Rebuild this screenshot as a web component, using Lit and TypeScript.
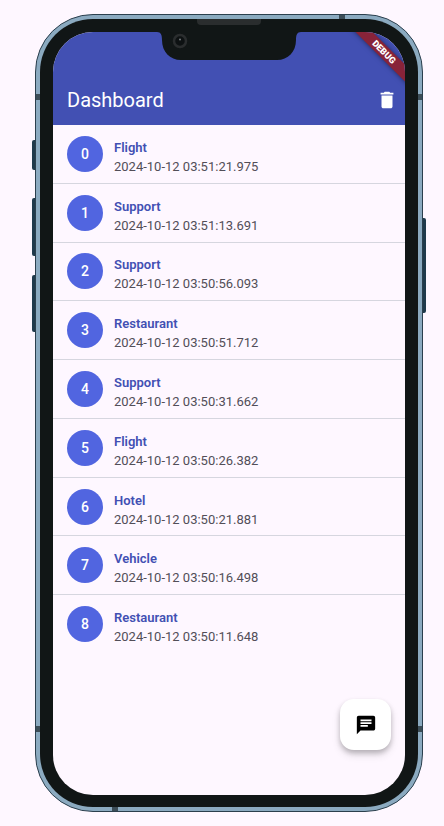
import { LitElement, html, css } from "lit";
import { customElement, property } from "lit/decorators.js";

interface Entry {
  kind: string;
  time: string;
}

const ENTRIES: Entry[] = [
  { kind: "Flight", time: "2024-10-12 03:51:21.975" },
  { kind: "Support", time: "2024-10-12 03:51:13.691" },
  { kind: "Support", time: "2024-10-12 03:50:56.093" },
  { kind: "Restaurant", time: "2024-10-12 03:50:51.712" },
  { kind: "Support", time: "2024-10-12 03:50:31.662" },
  { kind: "Flight", time: "2024-10-12 03:50:26.382" },
  { kind: "Hotel", time: "2024-10-12 03:50:21.881" },
  { kind: "Vehicle", time: "2024-10-12 03:50:16.498" },
  { kind: "Restaurant", time: "2024-10-12 03:50:11.648" },
];

/* Phone body: metal rim, side keys, bezel, notch. The slot is the screen. */
@customElement("phone-frame")
export class PhoneFrame extends LitElement {
  static styles = css`
    :host {
      display: flex;
      flex: 1;
    }
    .rim {
      position: relative;
      flex: 1;
      display: flex;
      box-sizing: border-box;
      padding: 4px;
      border: 1px solid #2b3f4d;
      border-radius: 58px;
      background: #8baac0;
    }
    .bezel {
      flex: 1;
      display: flex;
      box-sizing: border-box;
      padding: 13px 13px 12px;
      border-radius: 53px;
      background: #111616;
    }
    .screen {
      position: relative;
      flex: 1;
      display: flex;
      overflow: hidden;
      border-radius: 40px;
      background: #fef7ff;
    }
    .key {
      position: absolute;
      width: 3px;
      background: #1f3a4b;
    }
    .left {
      left: -4px;
      border-radius: 2px 0 0 2px;
    }
    .right {
      right: -4px;
      border-radius: 0 2px 2px 0;
      top: 203px;
      height: 95px;
    }
    .mute {
      top: 125px;
      height: 30px;
    }
    .up {
      top: 183px;
      height: 58px;
    }
    .down {
      top: 260px;
      height: 57px;
    }
    .seam {
      position: absolute;
      background: #3c4d57;
    }
    .side {
      width: 4px;
      height: 6px;
    }
    .edge {
      width: 6px;
      height: 4px;
    }
    .l {
      left: 0;
    }
    .r {
      right: 0;
    }
    .high {
      top: 79px;
    }
    .low {
      bottom: 79px;
    }
    .over {
      top: 0;
      right: 77px;
    }
    .under {
      bottom: 0;
      left: 76px;
    }
    .notch {
      position: absolute;
      top: 3px;
      left: 50%;
      margin-left: -72px;
      display: block;
    }
  `;

  render() {
    return html`
      <div class="rim">
        <span class="key left mute"></span>
        <span class="key left up"></span>
        <span class="key left down"></span>
        <span class="key right"></span>
        <span class="seam side l high"></span>
        <span class="seam side r high"></span>
        <span class="seam side l low"></span>
        <span class="seam side r low"></span>
        <span class="seam edge over"></span>
        <span class="seam edge under"></span>
        <div class="bezel">
          <div class="screen"><slot></slot></div>
        </div>
        <svg class="notch" width="144" height="44" viewBox="0 0 144 44" aria-hidden="true">
          <path
            d="M0 13V14C4 14 5 17 5 22C5 34 13 42 24 42H120C131 42 139 34 139 22C139 17 140 14 144 14V13Z"
            fill="#111616"
          />
          <path d="M40 1H104V3Q104 7 100 7H44Q40 7 40 3Z" fill="#2a2d2e" />
          <circle cx="23" cy="23" r="6" fill="#0d1112" stroke="#2a2d2e" stroke-width="2.5" />
          <circle cx="23" cy="21.500" r="1" fill="#777c80" />
        </svg>
      </div>
    `;
  }
}

@customElement("entry-list")
export class EntryList extends LitElement {
  @property({ attribute: false }) entries: Entry[] = [];

  static styles = css`
    :host {
      display: block;
    }
    .list {
      display: grid;
      grid-auto-rows: 1fr;
      min-height: 529px;
      margin: 0;
      padding: 0;
      list-style: none;
    }
    .row {
      display: flex;
      align-items: center;
      gap: 11px;
      padding: 0 14px;
      border-bottom: 1px solid #d6d6df;
    }
    .row:last-child {
      border-bottom-color: transparent;
    }
    .avatar {
      flex: none;
      width: 36px;
      height: 36px;
      border-radius: 50%;
      background: #5165e0;
      color: #fff;
      font-size: 14px;
      font-weight: 500;
      line-height: 36px;
      text-align: center;
    }
    .kind {
      color: #4250b3;
      font-size: 13px;
      font-weight: 600;
      line-height: 19px;
    }
    .time {
      color: #524e58;
      font-size: 13px;
      line-height: 19px;
    }
    .text {
      padding-top: 6px;
    }
  `;

  render() {
    return html`
      <ul class="list">
        ${this.entries.map(
          (e, i) => html`
            <li class="row">
              <span class="avatar">${i}</span>
              <div class="text">
                <div class="kind">${e.kind}</div>
                <div class="time">${e.time}</div>
              </div>
            </li>
          `
        )}
      </ul>
    `;
  }
}

@customElement("app-root")
export class AppRoot extends LitElement {
  static styles = css`
    :host {
      display: flex;
      box-sizing: border-box;
      min-height: 100vh;
      padding: 14px 21px 14px 35px;
      background: #fef7ff;
      font-family: Roboto, "Liberation Sans", sans-serif;
    }
    .page {
      flex: 1;
      min-width: 0;
    }
    .bar {
      display: flex;
      align-items: center;
      justify-content: space-between;
      min-height: 51px;
      padding: 42px 7px 0 14px;
      background: #4250b3;
      color: #fff;
    }
    .title {
      margin: 0;
      font-size: 20px;
      font-weight: 400;
      line-height: 24px;
    }
    button {
      display: flex;
      align-items: center;
      justify-content: center;
      border: 0;
      padding: 0;
      cursor: pointer;
    }
    .delete {
      background: none;
      color: #fff;
    }
    svg {
      display: block;
      fill: currentColor;
    }
    .fab {
      position: absolute;
      right: 14px;
      bottom: 45px;
      width: 51px;
      height: 51px;
      border-radius: 14px;
      background: #fff;
      color: #000;
      box-shadow: 0 3px 5px rgba(0, 0, 0, 0.2), 0 5px 9px rgba(0, 0, 0, 0.12);
    }
    .ribbon {
      position: absolute;
      top: 14px;
      right: -29px;
      width: 100px;
      transform: rotate(45deg);
      background: #882339;
      color: #fff;
      font-size: 9px;
      font-weight: 900;
      line-height: 12px;
      text-align: center;
      box-shadow: 0 0 5px rgba(0, 0, 0, 0.5);
    }
  `;

  render() {
    return html`
      <phone-frame>
        <main class="page">
          <header class="bar">
            <h1 class="title">Dashboard</h1>
            <button class="delete" aria-label="Delete all">
              <svg width="22" height="22" viewBox="0 0 24 24">
                <path d="M6 19c0 1.100.9 2 2 2h8c1.100 0 2-.9 2-2V7H6v12zM19 4h-3.500l-1-1h-5l-1 1H5v2h14V4z" />
              </svg>
            </button>
          </header>
          <entry-list .entries=${ENTRIES}></entry-list>
        </main>
        <button class="fab" aria-label="New message">
          <svg width="22" height="22" viewBox="0 0 24 24">
            <path
              d="M20 2H4c-1.100 0-1.990.9-1.990 2L2 22l4-4h14c1.100 0 2-.9 2-2V4c0-1.100-.9-2-2-2zM6 9h12v2H6V9zm8 5H6v-2h8v2zm4-6H6V6h12v2z"
            />
          </svg>
        </button>
        <div class="ribbon">DEBUG</div>
      </phone-frame>
    `;
  }
}
